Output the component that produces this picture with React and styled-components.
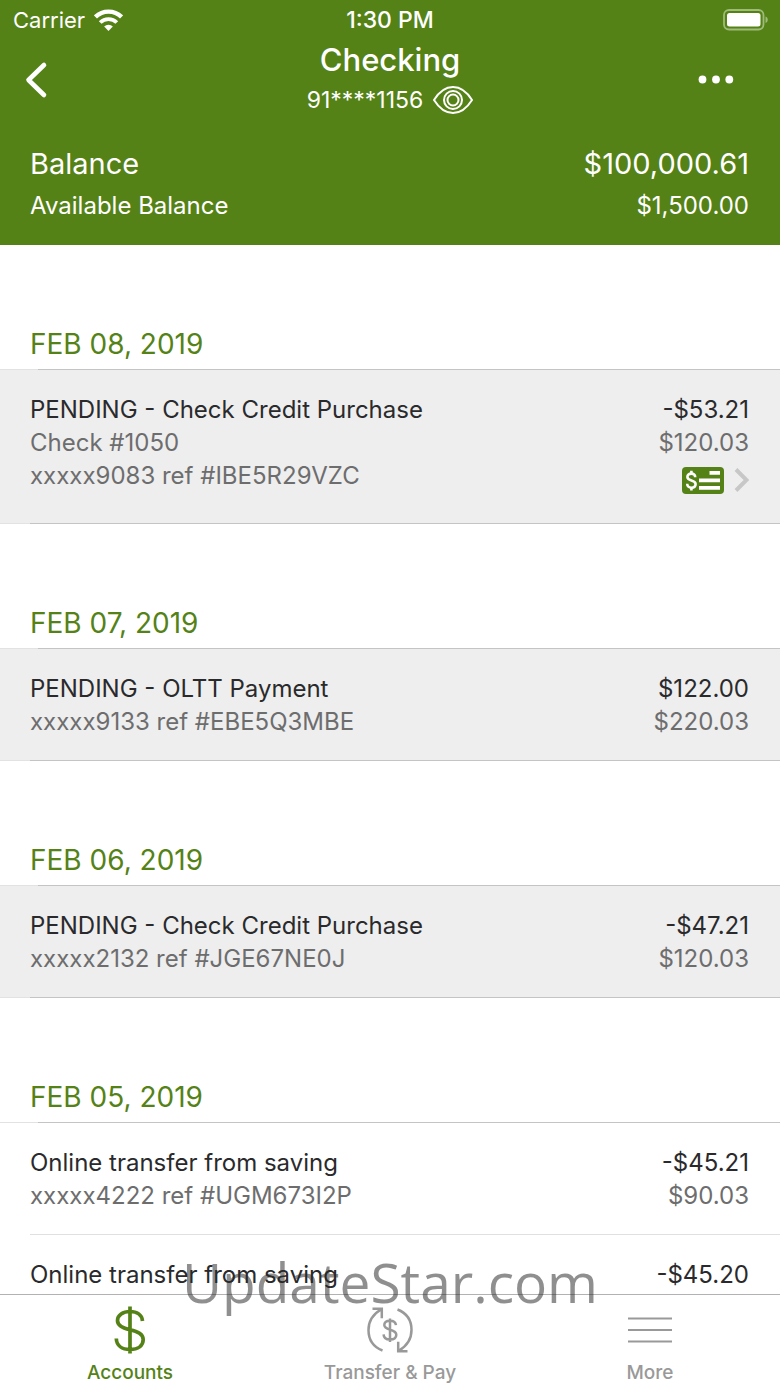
import React, { useState } from 'react';
import styled, { createGlobalStyle } from 'styled-components';

const GREEN = '#558217';

const sections = [
  {
    date: 'FEB 08, 2019',
    items: [
      {
        title: 'PENDING - Check Credit Purchase',
        details: ['Check #1050', 'xxxxx9083 ref #IBE5R29VZC'],
        amount: '-$53.21',
        balance: '$120.03',
        pending: true,
        hasCheck: true,
      },
    ],
  },
  {
    date: 'FEB 07, 2019',
    items: [
      {
        title: 'PENDING - OLTT Payment',
        details: ['xxxxx9133 ref #EBE5Q3MBE'],
        amount: '$122.00',
        balance: '$220.03',
        pending: true,
      },
    ],
  },
  {
    date: 'FEB 06, 2019',
    items: [
      {
        title: 'PENDING - Check Credit Purchase',
        details: ['xxxxx2132 ref #JGE67NE0J'],
        amount: '-$47.21',
        balance: '$120.03',
        pending: true,
      },
    ],
  },
  {
    date: 'FEB 05, 2019',
    items: [
      {
        title: 'Online transfer from saving',
        details: ['xxxxx4222 ref #UGM673I2P'],
        amount: '-$45.21',
        balance: '$90.03',
      },
      {
        title: 'Online transfer from saving',
        details: [],
        amount: '-$45.20',
      },
    ],
  },
];

export default function App() {
  const [tab, setTab] = useState('Accounts');
  return (
    <>
      <GlobalStyle />
      <Screen>
        <Header>
          <StatusBar>
            <Carrier>
              Carrier
              <WifiIcon />
            </Carrier>
            <Clock>1:30 PM</Clock>
            <BatterySlot>
              <BatteryIcon />
            </BatterySlot>
          </StatusBar>
          <NavBar>
            <IconButton aria-label="Back">
              <svg width="24" height="38" viewBox="0 0 24 38" fill="none" stroke="#fff" strokeWidth="4.6" strokeLinecap="round" strokeLinejoin="round">
                <path d="M20 4 4.500 19 20 34" />
              </svg>
            </IconButton>
            <TitleBlock>
              <Title>Checking</Title>
              <AccountNumber>
                91****1156
                <IconButton aria-label="Show account number">
                  <EyeIcon />
                </IconButton>
              </AccountNumber>
            </TitleBlock>
            <IconButton aria-label="Options" $end>
              <svg width="36" height="10" viewBox="0 0 36 10" fill="#fff">
                <circle cx="4.500" cy="4.500" r="3.900" />
                <circle cx="18" cy="4.500" r="3.900" />
                <circle cx="31.300" cy="4.500" r="3.900" />
              </svg>
            </IconButton>
          </NavBar>
          <Balances>
            <BalanceLine $large>
              <span>Balance</span>
              <span>$100,000.61</span>
            </BalanceLine>
            <BalanceLine>
              <span>Available Balance</span>
              <span>$1,500.00</span>
            </BalanceLine>
          </Balances>
        </Header>

        <History>
          {sections.map((section) => (
            <section key={section.date}>
              <DateHeading>{section.date}</DateHeading>
              <Rows>
                {section.items.map((item, i) => (
                  <Row key={i} $pending={item.pending} $first={i === 0}>
                    <Info>
                      <Primary>{item.title}</Primary>
                      {item.details.map((line) => (
                        <Secondary key={line}>{line}</Secondary>
                      ))}
                    </Info>
                    <Amounts>
                      <Primary>{item.amount}</Primary>
                      {item.balance && <Secondary>{item.balance}</Secondary>}
                      {item.hasCheck && (
                        <CheckLink href="#check" aria-label="View check image">
                          <CheckIcon />
                          <svg width="16" height="26" viewBox="0 0 16 26" fill="none" stroke="#c7c7c7" strokeWidth="4">
                            <path d="M3 2.500 13.500 13 3 23.500" />
                          </svg>
                        </CheckLink>
                      )}
                    </Amounts>
                  </Row>
                ))}
              </Rows>
            </section>
          ))}
        </History>

        <TabBar>
          <Tab $active={tab === 'Accounts'} onClick={() => setTab('Accounts')}>
            <DollarIcon />
            Accounts
          </Tab>
          <Tab $active={tab === 'Transfer'} onClick={() => setTab('Transfer')}>
            <TransferIcon />
            Transfer &amp; Pay
          </Tab>
          <Tab $active={tab === 'More'} onClick={() => setTab('More')}>
            <MenuIcon />
            More
          </Tab>
        </TabBar>
        <Watermark>UpdateStar.com</Watermark>
      </Screen>
    </>
  );
}

function WifiIcon() {
  return (
    <svg width="29" height="22" viewBox="0 0 28 21" fill="none" stroke="#fff" strokeWidth="4.200">
      <path d="M1.400 7.600a18 18 0 0 1 25.200 0" />
      <path d="M6 12.900a11.300 11.300 0 0 1 16 0" strokeWidth="3.700" />
      <path d="M14 21l-4.200-4.300a6 6 0 0 1 8.400 0z" fill="#fff" stroke="none" />
    </svg>
  );
}

function BatteryIcon() {
  return (
    <svg width="46" height="22" viewBox="0 0 46 22" fill="none">
      <rect x="1" y="1" width="39.500" height="19.500" rx="5" stroke="#9fbb7a" strokeWidth="1.800" />
      <rect x="4" y="4" width="33.500" height="13.500" rx="2.500" fill="#fff" />
      <path d="M42.500 7.500c3 1 3 5.500 0 6.500z" fill="#9fbb7a" />
    </svg>
  );
}

function EyeIcon() {
  return (
    <svg width="40" height="28" viewBox="0 0 40 28" fill="none" stroke="#fff" strokeWidth="2">
      <path d="M1 14C6 6 12.500 1 20 1s14 5 19 13c-5 8-11.500 13-19 13S6 22 1 14z" strokeLinejoin="round" />
      <circle cx="20" cy="14" r="9" />
      <circle cx="20" cy="14" r="5.500" />
    </svg>
  );
}

function CheckIcon() {
  return (
    <svg width="42" height="27" viewBox="0 0 42 27" fill="none">
      <rect width="42" height="27" rx="4" fill={GREEN} />
      <path d="M27.500 4h10.500v3.800h-10.500zM17 11.500h21v3.800h-21zM17 19h21v3.800h-21z" fill="#fff" />
      <path d="M13.200 10.200c0-2.300-1.600-3.600-3.900-3.600s-3.900 1.300-3.900 3.400c0 4.400 8.200 2.500 8.200 7 0 2.200-1.700 3.700-4.200 3.700s-4.200-1.500-4.200-3.900" stroke="#fff" strokeWidth="2.600" />
      <path d="M9.400 3.800v3M9.400 20.500v3" stroke="#fff" strokeWidth="2.600" />
    </svg>
  );
}

function DollarIcon() {
  return (
    <svg width="32" height="48" viewBox="0 0 32 48" fill="none" stroke="currentColor" strokeWidth="3.700">
      <path d="M28.500 15C28 9 23 5.500 16 5.500S3.500 9 3.500 14.500c0 5.200 4.500 7.500 12.500 9.300s13.200 4 13.200 9.700c0 6.200-5.200 10-13.200 10S2.500 39.500 2.300 32.500M16 .5v47" />
    </svg>
  );
}

function TransferIcon() {
  return (
    <svg width="46" height="46" viewBox="0 0 46 46" fill="none" stroke="currentColor" strokeWidth="2.500">
      <path d="M15.500 43.500C6.500 40 1.500 32.500 1.500 23c0-8.500 4-15.500 12.500-20.500M5.500 1.800h9.300v9.500" />
      <path d="M30.500 2.500C39.500 6 44.500 13.500 44.500 23c0 8.500-4 15.500-12.500 20.500M40.500 44.200h-9.300v-9.500" />
      <path d="M29 18.200c-.3-3-2.600-4.500-6-4.500s-5.700 1.700-5.700 4.400c0 6 12 3.300 12 9.700 0 3-2.400 4.800-6.300 4.800s-6.300-1.900-6.400-5.200M23 11.500v23.500" />
    </svg>
  );
}

function MenuIcon() {
  return (
    <svg width="44" height="26" viewBox="0 0 44 26" stroke="currentColor" strokeWidth="2.200">
      <path d="M0 1.500h44M0 13h44M0 24.500h44" />
    </svg>
  );
}

const GlobalStyle = createGlobalStyle`
  * {
    box-sizing: border-box;
  }
  body {
    margin: 0;
    background: #fff;
    font-family: Inter, 'Liberation Sans', sans-serif;
  }
`;

const Screen = styled.div`
  position: relative;
  display: flex;
  flex-direction: column;
  height: 100vh;
  overflow: hidden;
`;

const Header = styled.header`
  flex: none;
  padding-bottom: 19px;
  background: ${GREEN};
  color: #fff;
`;

const StatusBar = styled.div`
  display: grid;
  grid-template-columns: 1fr auto 1fr;
  align-items: center;
  height: 40px;
  padding: 0 11px;
  font-size: 22px;
`;

const Carrier = styled.div`
  display: flex;
  align-items: center;
  gap: 9px;
  padding-left: 2px;
`;

const Clock = styled.time`
  font-size: 23px;
  font-weight: 500;
`;

const BatterySlot = styled.div`
  display: flex;
  justify-content: flex-end;
`;

const NavBar = styled.div`
  display: grid;
  grid-template-columns: 1fr auto 1fr;
  align-items: center;
  height: 80px;
  padding: 0 24px 2px;
`;

const IconButton = styled.button`
  display: flex;
  align-items: center;
  justify-self: ${(props) => (props.$end ? 'end' : 'start')};
  padding: ${(props) => (props.$end ? '0 22px 0 0' : '0')};
  border: 0;
  background: none;
  color: inherit;
  cursor: pointer;
`;

const TitleBlock = styled.div`
  display: flex;
  flex-direction: column;
  align-items: center;
`;

const Title = styled.h1`
  margin: 0;
  font-size: 31px;
  font-weight: 500;
  line-height: 40px;
`;

const AccountNumber = styled.div`
  display: flex;
  align-items: center;
  gap: 10px;
  font-size: 23px;
  line-height: 40px;
`;

const Balances = styled.div`
  padding: 22px 31px 0 30px;
`;

const BalanceLine = styled.div`
  display: flex;
  justify-content: space-between;
  font-size: ${(props) => (props.$large ? '29px' : '24px')};
  line-height: ${(props) => (props.$large ? '44px' : '40px')};
`;

const History = styled.main`
  flex: 1;
  min-height: 0;
  overflow-y: auto;
  scrollbar-width: none;
`;

const DateHeading = styled.h2`
  display: flex;
  align-items: flex-end;
  height: 124px;
  margin: 0;
  padding: 0 30px 8px;
  color: ${GREEN};
  font-size: 28px;
  font-weight: 400;
  line-height: 34px;
`;

const Rows = styled.ul`
  margin: 0;
  padding: 0;
  list-style: none;
`;

const line = (inset, color) => `linear-gradient(to right, #e2e2e2 ${inset}, ${color} ${inset})`;

const Row = styled.li`
  display: flex;
  justify-content: space-between;
  padding: ${(props) => (props.$first ? '24px' : '23px')} 31px 23px 30px;
  background-color: ${(props) => (props.$pending ? '#eeeeee' : '#fff')};
  background-image:
    ${(props) => (props.$first ? line('38px', '#c4c4c4') : 'none')},
    ${(props) => (props.$pending ? line('30px', '#c4c4c4') : 'linear-gradient(to right, #fff 30px, #e0e0e0 30px)')};
  background-position: top, bottom;
  background-size: 100% 1px;
  background-repeat: no-repeat;
`;

const Info = styled.div``;

const Amounts = styled.div`
  display: flex;
  flex-direction: column;
  align-items: flex-end;
`;

const Primary = styled.div`
  color: #2a2a2c;
  font-size: 24px;
  line-height: 33px;
`;

const Secondary = styled(Primary)`
  color: #6d6d6e;
`;

const CheckLink = styled.a`
  display: flex;
  align-items: center;
  gap: 9px;
  height: 42px;
`;

const TabBar = styled.nav`
  display: grid;
  grid-template-columns: repeat(3, 1fr);
  flex: none;
  height: 93px;
  border-top: 1px solid #b2b2b2;
  background: #fff;
`;

const Tab = styled.button`
  display: grid;
  grid-template-rows: 50px 24px;
  place-items: center;
  align-content: start;
  gap: 6px;
  padding: 10px 0 0;
  border: 0;
  background: none;
  color: ${(props) => (props.$active ? GREEN : '#999')};
  font-family: inherit;
  font-size: 19px;
  font-weight: 500;
  line-height: 24px;
  cursor: pointer;
`;

const Watermark = styled.div`
  position: absolute;
  right: 0;
  bottom: 65px;
  left: 0;
  color: rgba(40, 40, 40, 0.52);
  font-family: 'Open Sans', 'Noto Sans', sans-serif;
  font-size: 55px;
  line-height: 80px;
  text-align: center;
  pointer-events: none;
`;
